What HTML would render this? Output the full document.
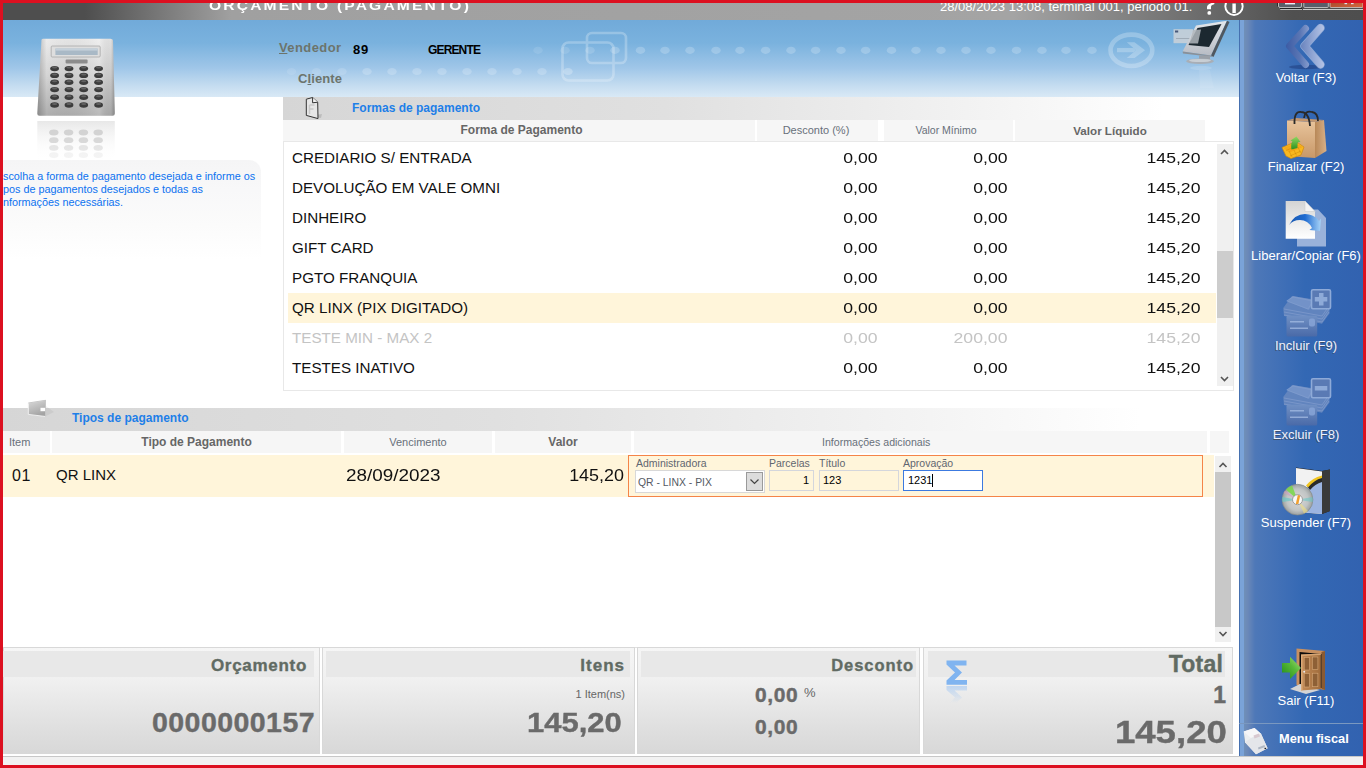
<!DOCTYPE html>
<html><head><meta charset="utf-8">
<style>
*{box-sizing:border-box;margin:0;padding:0}
html,body{width:1366px;height:768px;overflow:hidden;background:#fff}
body{position:relative;font-family:"Liberation Sans",sans-serif;}
.a{position:absolute}
.nw{white-space:nowrap}
svg{position:absolute;overflow:visible}
#rl{left:0;top:0;width:3px;height:768px;background:#DC1020}
#rt{left:0;top:0;width:1366px;height:3px;background:#DC1020}
#rr{left:1363px;top:0;width:3px;height:768px;background:#DC1020}
#rb{left:0;top:765px;width:1366px;height:3px;background:#DC1020}
#tb{left:3px;top:3px;width:1360px;height:17px;background:linear-gradient(90deg,#4e4e4e 0px,#4e4e4e 82px,#a0a0a0 228px,#a4a4a4 1010px,#505050 1290px,#4e4e4e 1360px)}
#hd{left:3px;top:20px;width:1236px;height:77px;background:linear-gradient(180deg,#71aad9 0%,#7ab2de 30%,#9fc6e8 62%,#c4dcf0 85%,#d9e9f6 100%)}
#rp{left:1239px;top:20px;width:124px;height:736px;background:linear-gradient(90deg,#4570b0 0px,#4570b0 1px,#7aa3d8 1px,#7aa3d8 5px,#7090b8 5px,#6a88b8 9px,#4e78b8 16px,#3c6db6 50px,#3368b4 66px,#3262b0 124px)}
.btxt{color:#fff;font-size:13px;text-align:center;width:124px;left:1244px}
.band{background:linear-gradient(90deg,#d6d6d6 0%,#e0e0e0 40%,#f4f4f4 75%,#ffffff 92%)}
.sect{color:#1e7fe8;font-weight:bold;font-size:12px}
.hcell{background:#f6f6f6;color:#68707a;font-size:11px;text-align:center;height:21px;line-height:21px}
.hcell.b{font-weight:bold;color:#666;font-size:12px}
.row{height:30px;left:284px;width:932px;font-size:15.2px;line-height:32px;color:#111}
.row span{position:absolute}
.row .c1{left:8px}
.row .c2,.row .c3,.row .c4{transform:scaleX(1.16);transform-origin:100% 0}
.row .c2{right:338.5px;}
.row .c3{right:208.5px}
.row .c4{right:16px}
.row.sel{background:#fff5da}
.row.dis{color:#c4c4c4}
.pan{top:647px;height:107px;border:1px solid #d8d8d8;background:linear-gradient(180deg,#f6f6f6 0%,#f0f0f0 30%,#dedede 80%,#d8d8d8 100%)}
.ph{top:651px;height:26px;background:#e8e8e8}
.pt{color:#616b63;font-weight:bold;font-size:16.5px;letter-spacing:.6px;-webkit-text-stroke:.35px #616b63}
.big{color:#6a6a6a;font-weight:bold;-webkit-text-stroke:.4px #6a6a6a}
.lbl{font-size:10.5px;color:#5f6670}
.fld{height:21px;border:1px solid #d4d6dc;font-size:11px;line-height:19px;color:#000}
</style></head><body>
<div id="tb" class="a"></div>
<div id="hd" class="a"></div>
<div id="rp" class="a"></div>

<!-- header decorations -->
<svg style="left:0;top:0" width="1240" height="100">
  <g fill="#fff">
    <ellipse cx="291.5" cy="71.5" rx="4.7" ry="3.6" opacity=".10"/>
    <ellipse cx="316.5" cy="71.5" rx="4.7" ry="3.6" opacity=".12"/>
    <ellipse cx="342" cy="71.5" rx="4.7" ry="3.6" opacity=".15"/>
    <ellipse cx="367" cy="71.5" rx="4.7" ry="3.6" opacity=".2"/>
    <ellipse cx="392" cy="71.5" rx="4.7" ry="3.6" opacity=".2"/>
    <ellipse cx="417" cy="71.5" rx="4.7" ry="3.6" opacity=".2"/>
    <ellipse cx="442" cy="71.5" rx="4.7" ry="3.6" opacity=".2"/>
    <ellipse cx="467" cy="71.5" rx="4.7" ry="3.6" opacity=".2"/>
    <ellipse cx="492" cy="71.5" rx="4.7" ry="3.6" opacity=".2"/>
    <ellipse cx="517" cy="71.5" rx="4.7" ry="3.6" opacity=".2"/>
    <ellipse cx="542" cy="71.5" rx="4.7" ry="3.6" opacity=".2"/>
    <ellipse cx="568" cy="71.5" rx="4.7" ry="3.6" opacity=".25"/>
  </g>
  <g fill="#fff" opacity=".2">
    <ellipse cx="538" cy="50.3" rx="4.7" ry="3.6" opacity=".5"/>
    <ellipse cx="565" cy="50.3" rx="4.7" ry="3.6" opacity=".6"/>
    <ellipse cx="590" cy="50.3" rx="4.7" ry="3.6" opacity=".7"/>
    <ellipse cx="615" cy="50.3" rx="4.7" ry="3.6"/>
    <ellipse cx="640.5" cy="50.3" rx="4.7" ry="3.6"/>
    <ellipse cx="665" cy="50.3" rx="4.7" ry="3.6"/>
    <ellipse cx="690" cy="50.3" rx="4.7" ry="3.6"/>
    <ellipse cx="716" cy="50.3" rx="4.7" ry="3.6"/>
    <ellipse cx="740" cy="50.3" rx="4.7" ry="3.6"/>
    <ellipse cx="765.6" cy="50.3" rx="4.7" ry="3.6"/>
    <ellipse cx="791" cy="50.3" rx="4.7" ry="3.6"/>
    <ellipse cx="815.6" cy="50.3" rx="4.7" ry="3.6"/>
    <ellipse cx="841" cy="50.3" rx="4.7" ry="3.6"/>
    <ellipse cx="865.6" cy="50.3" rx="4.7" ry="3.6"/>
    <ellipse cx="891.5" cy="50.3" rx="4.7" ry="3.6"/>
    <ellipse cx="916" cy="50.3" rx="4.7" ry="3.6"/>
    <ellipse cx="941" cy="50.3" rx="4.7" ry="3.6"/>
    <ellipse cx="966" cy="50.3" rx="4.7" ry="3.6"/>
    <ellipse cx="991" cy="50.3" rx="4.7" ry="3.6"/>
    <ellipse cx="1016.5" cy="50.3" rx="4.7" ry="3.6"/>
    <ellipse cx="1042" cy="50.3" rx="4.7" ry="3.6"/>
    <ellipse cx="1066" cy="50.3" rx="4.7" ry="3.6"/>
    <ellipse cx="1092" cy="50.3" rx="4.7" ry="3.6"/>
  </g>
  <g fill="none" stroke="#fff" stroke-width="2.6" opacity=".25">
    <rect x="562.5" y="42.5" width="51" height="38" rx="6"/>
    <rect x="587" y="33" width="39" height="30" rx="5"/>
    <ellipse cx="1131.4" cy="50.3" rx="20.9" ry="15.7" stroke-width="4.6"/>
  </g>
  <g fill="#fff" opacity=".25">
    <path d="M1117 48 H1133.5 L1136 50.2 L1133.5 52.3 H1117 Z"/>
    <path d="M1126.8 42.3 H1134.5 L1145 50.2 L1134.5 58 H1126.8 L1136 50.2 Z"/>
  </g>
</svg>

<!-- calculator -->
<svg style="left:0;top:0" width="130" height="170">
  <defs>
    <linearGradient id="cb" x1="0" y1="0" x2="0" y2="1"><stop offset="0" stop-color="#ececec"/><stop offset=".45" stop-color="#d6d6d6"/><stop offset="1" stop-color="#aeaeae"/></linearGradient>
    <linearGradient id="cs" x1="0" y1="0" x2="1" y2="0"><stop offset="0" stop-color="#000" stop-opacity=".22"/><stop offset=".12" stop-color="#000" stop-opacity="0"/><stop offset=".8" stop-color="#fff" stop-opacity=".15"/><stop offset=".95" stop-color="#000" stop-opacity=".05"/><stop offset="1" stop-color="#000" stop-opacity=".25"/></linearGradient>
    <linearGradient id="cr" x1="0" y1="0" x2="0" y2="1"><stop offset="0" stop-color="#e2e2e2" stop-opacity=".8"/><stop offset="1" stop-color="#fff" stop-opacity="0"/></linearGradient>
  </defs>
  <path d="M41.5 40 Q41.5 38.8 43.5 38.8 L110.5 38.8 Q112.8 38.8 113 40.5 L114.8 113.5 Q114.8 115.8 112.5 115.8 L39.5 115.8 Q37.2 115.8 37.3 113.5 Z" fill="url(#cb)"/>
  <path d="M41.5 40 Q41.5 38.8 43.5 38.8 L110.5 38.8 Q112.8 38.8 113 40.5 L114.8 113.5 Q114.8 115.8 112.5 115.8 L39.5 115.8 Q37.2 115.8 37.3 113.5 Z" fill="url(#cs)"/>
  <rect x="51.2" y="46" width="49" height="11" rx="1" fill="#dedede" stroke="#a8a8a8" stroke-width=".8"/>
  <rect x="55.4" y="48.6" width="42.3" height="6.4" fill="#a9b9c6"/>
  <rect x="55.4" y="48.6" width="42.3" height="2" fill="#c4d0da"/>
  <rect x="65.6" y="59.6" width="22" height="3.9" rx="1" fill="#8c8c8c"/>
  <g fill="#3c3c3c"><ellipse cx="54.6" cy="68.6" rx="4.4" ry="2.7"/><ellipse cx="69" cy="68.6" rx="4.4" ry="2.7"/><ellipse cx="83.7" cy="68.6" rx="4.4" ry="2.7"/><ellipse cx="98.6" cy="68.6" rx="4.4" ry="2.7"/><ellipse cx="54.6" cy="75.4" rx="4.4" ry="2.7"/><ellipse cx="69" cy="75.4" rx="4.4" ry="2.7"/><ellipse cx="83.7" cy="75.4" rx="4.4" ry="2.7"/><ellipse cx="98.6" cy="75.4" rx="4.4" ry="2.7"/><ellipse cx="54.6" cy="82.2" rx="4.4" ry="2.7"/><ellipse cx="69" cy="82.2" rx="4.4" ry="2.7"/><ellipse cx="83.7" cy="82.2" rx="4.4" ry="2.7"/><ellipse cx="98.6" cy="82.2" rx="4.4" ry="2.7"/><ellipse cx="54.6" cy="89.6" rx="4.4" ry="2.7"/><ellipse cx="69" cy="89.6" rx="4.4" ry="2.7"/><ellipse cx="83.7" cy="89.6" rx="4.4" ry="2.7"/><ellipse cx="98.6" cy="89.6" rx="4.4" ry="2.7"/><ellipse cx="54.6" cy="97.2" rx="4.4" ry="2.7"/><ellipse cx="69" cy="97.2" rx="4.4" ry="2.7"/><ellipse cx="83.7" cy="97.2" rx="4.4" ry="2.7"/><ellipse cx="98.6" cy="97.2" rx="4.4" ry="2.7"/><ellipse cx="54.6" cy="105" rx="4.4" ry="2.7"/><ellipse cx="69" cy="105" rx="4.4" ry="2.7"/><ellipse cx="83.7" cy="105" rx="4.4" ry="2.7"/><ellipse cx="98.6" cy="105" rx="4.4" ry="2.7"/></g>
  <g fill="#7a7a7a" opacity=".6"><ellipse cx="54.6" cy="67.6" rx="2.6" ry="1" /><ellipse cx="69" cy="67.6" rx="2.6" ry="1" /><ellipse cx="83.7" cy="67.6" rx="2.6" ry="1" /><ellipse cx="98.6" cy="67.6" rx="2.6" ry="1" /><ellipse cx="54.6" cy="74.4" rx="2.6" ry="1" /><ellipse cx="69" cy="74.4" rx="2.6" ry="1" /><ellipse cx="83.7" cy="74.4" rx="2.6" ry="1" /><ellipse cx="98.6" cy="74.4" rx="2.6" ry="1" /><ellipse cx="54.6" cy="81.2" rx="2.6" ry="1" /><ellipse cx="69" cy="81.2" rx="2.6" ry="1" /><ellipse cx="83.7" cy="81.2" rx="2.6" ry="1" /><ellipse cx="98.6" cy="81.2" rx="2.6" ry="1" /><ellipse cx="54.6" cy="88.6" rx="2.6" ry="1" /><ellipse cx="69" cy="88.6" rx="2.6" ry="1" /><ellipse cx="83.7" cy="88.6" rx="2.6" ry="1" /><ellipse cx="98.6" cy="88.6" rx="2.6" ry="1" /><ellipse cx="54.6" cy="96.2" rx="2.6" ry="1" /><ellipse cx="69" cy="96.2" rx="2.6" ry="1" /><ellipse cx="83.7" cy="96.2" rx="2.6" ry="1" /><ellipse cx="98.6" cy="96.2" rx="2.6" ry="1" /><ellipse cx="54.6" cy="104" rx="2.6" ry="1" /><ellipse cx="69" cy="104" rx="2.6" ry="1" /><ellipse cx="83.7" cy="104" rx="2.6" ry="1" /><ellipse cx="98.6" cy="104" rx="2.6" ry="1" /></g>
  <rect x="37.3" y="121" width="77.5" height="40" fill="url(#cr)"/>
  <g fill="#cacaca"><ellipse cx="53.8" cy="132.5" rx="4.7" ry="2.9" opacity="0.8"/><ellipse cx="68.6" cy="132.5" rx="4.7" ry="2.9" opacity="0.8"/><ellipse cx="83.4" cy="132.5" rx="4.7" ry="2.9" opacity="0.8"/><ellipse cx="98.2" cy="132.5" rx="4.7" ry="2.9" opacity="0.8"/><ellipse cx="53.8" cy="140.2" rx="4.7" ry="2.9" opacity="0.7"/><ellipse cx="68.6" cy="140.2" rx="4.7" ry="2.9" opacity="0.7"/><ellipse cx="83.4" cy="140.2" rx="4.7" ry="2.9" opacity="0.7"/><ellipse cx="98.2" cy="140.2" rx="4.7" ry="2.9" opacity="0.7"/><ellipse cx="53.8" cy="147.8" rx="4.7" ry="2.9" opacity="0.45"/><ellipse cx="68.6" cy="147.8" rx="4.7" ry="2.9" opacity="0.45"/><ellipse cx="83.4" cy="147.8" rx="4.7" ry="2.9" opacity="0.45"/><ellipse cx="98.2" cy="147.8" rx="4.7" ry="2.9" opacity="0.45"/><ellipse cx="53.8" cy="155.1" rx="4.7" ry="2.9" opacity="0.2"/><ellipse cx="68.6" cy="155.1" rx="4.7" ry="2.9" opacity="0.2"/><ellipse cx="83.4" cy="155.1" rx="4.7" ry="2.9" opacity="0.2"/><ellipse cx="98.2" cy="155.1" rx="4.7" ry="2.9" opacity="0.2"/></g>
</svg>

<!-- monitor -->
<svg style="left:0;top:0" width="1240" height="100">
  <defs><linearGradient id="mfr" x1="0" y1="0" x2="0" y2="1"><stop offset="0" stop-color="#e4e8ec"/><stop offset="1" stop-color="#b8bcc4"/></linearGradient></defs>
  <rect x="1173.5" y="29.2" width="19.5" height="14" fill="#c8d0d8" opacity=".9"/>
  <rect x="1175" y="30.5" width="3.2" height="2" fill="#46587a"/>
  <rect x="1176" y="38" width="14" height=".8" fill="#98a4b0"/>
  <path d="M1196 25.5 L1227 20.7 L1211 55.4 L1182.6 51.6 Z" fill="url(#mfr)"/>
  <path d="M1197.5 28 L1221.5 24 L1209 47 L1188.5 45 Z" fill="#1c2830"/>
  <path d="M1193 30 L1201 29.5 L1198 43.5 L1189.5 43.5 Z" fill="#b0b6bc" opacity=".85"/>
  <path d="M1227 20.7 L1229.5 22 L1213.5 57 L1211 55.4 Z" fill="#505860"/>
  <path d="M1182.6 51.6 L1211 55.4 L1213.5 57 L1183 53.5 Z" fill="#8a9098"/>
  <rect x="1199" y="55.5" width="11" height="4.5" fill="#9aa0a8"/>
  <ellipse cx="1200" cy="61.2" rx="13.8" ry="2.8" fill="#a8aeb6"/>
  <ellipse cx="1200" cy="60.5" rx="11" ry="1.6" fill="#c8ced4"/>
  <ellipse cx="1201" cy="68" rx="11" ry="2.2" fill="#fff" opacity=".14"/>
  <path d="M1199 70 h11 l4 18 h-14z" fill="#fff" opacity=".08"/>
</svg>

<!-- title -->
<div class="a nw" style="left:209px;top:-1.7px;color:#fff;font-weight:bold;font-size:13px;transform:scaleX(1.2);transform-origin:0 0;letter-spacing:1.8px">ORÇAMENTO (PAGAMENTO)</div>
<div class="a nw" style="left:940px;top:-1px;color:#fff;font-size:13px">28/08/2023 13:08, terminal 001, periodo 01.</div>
<!-- ? and i -->

<svg style="left:0;top:0" width="1366" height="20">
  <path d="M1207 9.2 L1207 6.8 Q1207.6 3 1214.6 2.4 L1214.2 4.2 Q1211 4.8 1211 7 L1211 9.2 Z" fill="#fff"/>
  <circle cx="1209.3" cy="12.9" r="1.9" fill="#fff"/>
  <circle cx="1234" cy="6.3" r="8.7" fill="none" stroke="#fff" stroke-width="1.9"/>
  <rect x="1232.4" y="3.5" width="3.4" height="9.5" fill="#fff"/>
  <defs><linearGradient id="clg" x1="0" y1="0" x2="1" y2="1"><stop offset="0" stop-color="#9a4028"/><stop offset="1" stop-color="#d8683e"/></linearGradient></defs>
  <path d="M1277.5 3 V6.5 L1280.5 9.5 H1302 M1303 9.5 H1363" fill="none" stroke="#d8d8d8" stroke-width=".9"/>
  <path d="M1277.5 3 V6.5 L1280 8.6 H1302" fill="none" stroke="#1a1a1a" stroke-width=".9"/>
  <rect x="1278.5" y="-2" width="23" height="9.5" rx="1.5" fill="#5a5e68" stroke="#c4c4c4" stroke-width=".9"/>
  <rect x="1303.8" y="-2" width="24.5" height="9.5" rx="1" fill="#5a5e6a" stroke="#c4c4c4" stroke-width=".9"/>
  <rect x="1330" y="-2" width="33" height="9.5" rx="1" fill="url(#clg)" stroke="#d8d8d8" stroke-width=".7"/>
  <rect x="1285" y="3" width="10" height="1.4" fill="#e8eef8"/>
  <rect x="1344.5" y="2.6" width="2.6" height="1.6" fill="#dfe6f2"/><rect x="1351" y="2.6" width="2.6" height="1.6" fill="#dfe6f2"/>
</svg>

<!-- header labels -->
<div class="a nw" style="left:279px;top:39.5px;color:#6c746c;font-weight:bold;font-size:13px;letter-spacing:.4px;"><u>V</u>endedor</div>
<div class="a nw" style="left:353px;top:42px;color:#000;font-weight:bold;font-size:13px;letter-spacing:.8px">89</div>
<div class="a nw" style="left:428px;top:43px;color:#000;font-weight:bold;font-size:12px;letter-spacing:-.85px">GERENTE</div>
<div class="a nw" style="left:298px;top:71px;color:#6c746c;font-weight:bold;font-size:13px;letter-spacing:.1px">C<u>l</u>iente</div>

<!-- info box -->
<div class="a" style="left:3px;top:160px;width:258px;height:100px;border-top-right-radius:12px;background:linear-gradient(180deg,#f5f5f6 0%,#f8f8f9 30%,#fbfbfb 65%,#fff 100%)"></div>
<div class="a nw" style="left:3px;top:170px;color:#0c72f0;font-size:10.8px;line-height:12.8px">scolha a forma de pagamento desejada e informe os<br>pos de pagamentos desejados e todas as<br>nformações necessárias.</div>

<!-- Formas de pagamento section -->
<div class="a band" style="left:283px;top:97px;width:956px;height:23px"></div>
<svg style="left:0;top:0" width="340" height="130">
  <path d="M309 116 L321 118 L322 114 Z" fill="#000" opacity=".12"/>
  <path d="M306.3 99.2 L312.6 97.5 L317.7 102.2 L318 118.6 L306.3 115.4 Z" fill="#e6e6e6" stroke="#333" stroke-width="1"/>
  <path d="M312.6 97.5 L312.6 102.8 L317.7 102.2" fill="#f4f4f4" stroke="#333" stroke-width="1"/>
  <path d="M309.5 105 h5 M309.5 105 v9 M309.5 109 h4" stroke="#c8c8c8" stroke-width="1.5" fill="none"/>
</svg>
<div class="a nw sect" style="left:352px;top:101px">Formas de pagamento</div>
<div class="a hcell b" style="left:283px;top:120px;width:472px;padding-left:5px">Forma de Pagamento</div>
<div class="a hcell" style="left:757px;top:120px;width:121px;padding-right:3px">Desconto (%)</div>
<div class="a hcell" style="left:884px;top:120px;width:129px;font-size:10.5px;padding-right:5px">Valor Mínimo</div>
<div class="a hcell b" style="left:1015px;top:120px;width:190px;font-size:11.6px">Valor Líquido</div>
<div class="a" style="left:283px;top:141px;width:951px;height:250px;border:1px solid #e8e8e8"></div>

<div class="a row" style="top:142px"><span class="c1">CREDIARIO S/ ENTRADA</span><span class="c2">0,00</span><span class="c3">0,00</span><span class="c4">145,20</span></div>
<div class="a row" style="top:172px"><span class="c1">DEVOLUÇÃO EM VALE OMNI</span><span class="c2">0,00</span><span class="c3">0,00</span><span class="c4">145,20</span></div>
<div class="a row" style="top:202px"><span class="c1">DINHEIRO</span><span class="c2">0,00</span><span class="c3">0,00</span><span class="c4">145,20</span></div>
<div class="a row" style="top:232px"><span class="c1">GIFT CARD</span><span class="c2">0,00</span><span class="c3">0,00</span><span class="c4">145,20</span></div>
<div class="a row" style="top:262px"><span class="c1">PGTO FRANQUIA</span><span class="c2">0,00</span><span class="c3">0,00</span><span class="c4">145,20</span></div>
<div class="a" style="left:288px;top:293px;width:928px;height:30px;background:#fff5da"></div>
<div class="a row" style="top:292px"><span class="c1">QR LINX (PIX DIGITADO)</span><span class="c2">0,00</span><span class="c3">0,00</span><span class="c4">145,20</span></div>
<div class="a row dis" style="top:321.5px"><span class="c1">TESTE MIN - MAX 2</span><span class="c2">0,00</span><span class="c3">200,00</span><span class="c4">145,20</span></div>
<div class="a row" style="top:351.5px"><span class="c1">TESTES INATIVO</span><span class="c2">0,00</span><span class="c3">0,00</span><span class="c4">145,20</span></div>

<!-- scrollbar 1 -->
<div class="a" style="left:1217px;top:144px;width:16px;height:242px;background:#f0f0f0"></div>
<div class="a" style="left:1217px;top:251px;width:16px;height:67px;background:#cdcdcd"></div>
<svg style="left:0;top:0" width="1240" height="400">
  <path d="M1221 154 L1224.5 150.5 L1228 154" fill="none" stroke="#555" stroke-width="1.6"/>
  <path d="M1221 377 L1224.5 380.5 L1228 377" fill="none" stroke="#555" stroke-width="1.6"/>
</svg>

<!-- Tipos de pagamento -->
<div class="a band" style="left:3px;top:408px;width:1236px;height:23px"></div>
<svg style="left:0;top:380px" width="80" height="60">
  <path d="M46 26 L54 32 L46 36 Z" fill="#000" opacity=".05"/>
  <defs><linearGradient id="cg" x1="0" y1="0" x2=".4" y2="1"><stop offset="0" stop-color="#dadada"/><stop offset="1" stop-color="#a4a4a4"/></linearGradient></defs>
  <path d="M28.3 23 L45.5 20.3 L45.5 36.5 L28.3 34.4 Z" fill="url(#cg)" stroke="#f4f4f4" stroke-width=".9"/>
  <path d="M28.3 23 L45.5 20.3 L45.5 36.5" fill="none" stroke="#8c8c8c" stroke-width=".6" opacity=".7"/>
  <rect x="40.5" y="27.8" width="4.6" height="3.4" fill="#fff"/>
</svg>
<div class="a nw sect" style="left:72px;top:411px">Tipos de pagamento</div>
<div class="a hcell" style="left:3px;top:431px;width:47px;height:22px;text-align:left;padding-left:6px;line-height:23px">Item</div>
<div class="a hcell b" style="left:52px;top:431px;width:289px;height:22px;line-height:23px">Tipo de Pagamento</div>
<div class="a hcell" style="left:344px;top:431px;width:148px;height:22px;line-height:23px">Vencimento</div>
<div class="a hcell b" style="left:495px;top:431px;width:136px;height:22px;line-height:23px">Valor</div>
<div class="a hcell" style="left:634px;top:431px;width:573px;height:22px"></div><div class="a nw hcell" style="left:822px;top:432px;background:none;font-size:10.6px">Informações adicionais</div>
<div class="a hcell" style="left:1210px;top:431px;width:19px;height:22px"></div>

<div class="a" style="left:3px;top:455px;width:1211px;height:42px;background:#fff5da"></div>
<div class="a nw" style="left:12px;top:467px;font-size:16px;color:#111;letter-spacing:.6px">01</div>
<div class="a nw" style="left:56px;top:466px;font-size:15px;color:#111">QR LINX</div>
<div class="a nw" style="left:345.6px;top:467px;font-size:16px;color:#111;transform:scaleX(1.18);transform-origin:0 0">28/09/2023</div>
<div class="a nw" style="right:742.5px;top:467px;font-size:16px;color:#111;transform:scaleX(1.12);transform-origin:100% 0">145,20</div>

<!-- detail form -->
<div class="a" style="left:628px;top:455px;width:575px;height:42px;border:1px solid #f58448"></div>
<div class="a nw lbl" style="left:636px;top:457px">Administradora</div>
<div class="a nw lbl" style="left:769px;top:457px">Parcelas</div>
<div class="a nw lbl" style="left:819px;top:457px">Título</div>
<div class="a nw lbl" style="left:903px;top:457px">Aprovação</div>
<div class="a fld" style="left:635px;top:470px;width:130px;height:23px;background:#fff;border-color:#d8d8d8"></div>
<div class="a nw" style="left:638px;top:476.5px;font-size:10.4px;color:#555a64">QR - LINX - PIX</div>
<div class="a" style="left:746px;top:472px;width:17px;height:19px;background:#dcdcdc;border:1px solid #9a9a9a"></div>
<svg style="left:0;top:0" width="1000" height="500"><path d="M750.5 479.5 L754.5 483.5 L758.5 479.5" fill="none" stroke="#444" stroke-width="1.2"/></svg>
<div class="a fld" style="left:769px;top:470px;width:45px;background:#fff5da;text-align:right;padding-right:4px">1</div>
<div class="a fld" style="left:819px;top:470px;width:80px;background:#fff5da;padding-left:3px">123</div>
<div class="a fld" style="left:903px;top:470px;width:80px;background:#fff;border:1px solid #3c7ae0;padding-left:4px">1231<span style="display:inline-block;width:1px;height:13px;background:#000;vertical-align:-3px"></span></div>

<!-- scrollbar 2 -->
<div class="a" style="left:1215px;top:456px;width:16px;height:186px;background:#f0f0f0"></div>
<div class="a" style="left:1215px;top:472px;width:16px;height:155px;background:#c8c8c8"></div>
<svg style="left:0;top:0" width="1240" height="650">
  <path d="M1219.5 467 L1223 463.5 L1226.5 467" fill="none" stroke="#555" stroke-width="1.6"/>
  <path d="M1219.5 632 L1223 635.5 L1226.5 632" fill="none" stroke="#555" stroke-width="1.6"/>
</svg>
<div class="a" style="left:3px;top:647px;width:1230px;height:1px;background:#e0e0e0"></div>

<!-- bottom panels -->
<div class="a pan" style="left:3px;width:317px"></div>
<div class="a ph" style="left:3px;width:311px"></div>
<div class="a nw pt" style="right:1059px;top:655.5px;font-size:17px;letter-spacing:.7px">Orçamento</div>
<div class="a nw big" style="right:1051px;top:706px;font-size:28.5px;letter-spacing:.45px">0000000157</div>

<div class="a pan" style="left:322px;width:313px"></div>
<div class="a ph" style="left:326px;width:304px"></div>
<div class="a nw pt" style="right:741px;top:656px;font-size:17px;letter-spacing:1px">Itens</div>
<div class="a nw" style="right:741px;top:688px;font-size:11px;color:#666">1 Item(ns)</div>
<div class="a nw big" style="right:744px;top:707px;font-size:28px;transform:scaleX(1.105);transform-origin:100% 0">145,20</div>

<div class="a pan" style="left:637px;width:283px"></div>
<div class="a ph" style="left:641px;width:275px"></div>
<div class="a nw pt" style="right:452px;top:656px;letter-spacing:.95px">Desconto</div>
<div class="a nw big" style="left:755px;top:682.5px;font-size:21px;letter-spacing:.6px">0,00</div>
<div class="a nw" style="left:804px;top:685px;font-size:13px;color:#666">%</div>
<div class="a nw big" style="left:755px;top:715px;font-size:21px;letter-spacing:.6px">0,00</div>

<div class="a pan" style="left:923px;width:310px"></div>
<div class="a ph" style="left:928px;width:297px"></div>
<svg style="left:0;top:0" width="1240" height="768">
  <defs><linearGradient id="sg" x1="0" y1="0" x2="0" y2="1"><stop offset="0" stop-color="#86b8f4" stop-opacity=".45"/><stop offset="1" stop-color="#86b8f4" stop-opacity="0"/></linearGradient></defs>
  <filter id="bl" x="-20%" y="-20%" width="140%" height="140%"><feGaussianBlur stdDeviation=".45"/></filter>
  <path d="M946.5 660.5 H966.5 V665.5 H954.5 L962 672.5 L954.5 680 H967 V684.8 H946.5 V680.5 L955 672.5 L946.5 664.5 Z" fill="#80b4f0" filter="url(#bl)"/>
  <path d="M946.5 686 H967 V690.5 H954.5 L962 697.5 L956 703 H950 L955 697.5 L946.5 690 Z" fill="url(#sg)" filter="url(#bl)"/>
</svg>
<div class="a nw pt" style="right:143px;top:651px;font-size:23px;letter-spacing:.2px">Total</div>
<div class="a nw big" style="right:140px;top:682px;font-size:23px">1</div>
<div class="a nw big" style="right:139px;top:714.5px;font-size:31px;transform:scaleX(1.18);transform-origin:100% 0">145,20</div>

<div class="a" style="left:3px;top:756px;width:1360px;height:9px;background:#f2f2f2;border-top:1px solid #c8c8c8"></div>

<!-- right panel icons -->
<svg style="left:0;top:0" width="1366" height="768">
  <defs>
    <linearGradient id="chv1" gradientUnits="userSpaceOnUse" x1="1285" y1="0" x2="1310" y2="0"><stop offset="0" stop-color="#3a5aa4"/><stop offset=".6" stop-color="#5a76b4"/><stop offset="1" stop-color="#8aa0d0"/></linearGradient>
    <linearGradient id="chv2" gradientUnits="userSpaceOnUse" x1="1300" y1="0" x2="1325" y2="0"><stop offset="0" stop-color="#6882bc"/><stop offset=".6" stop-color="#98acd8"/><stop offset="1" stop-color="#b8c6e6"/></linearGradient>
    <linearGradient id="bag" x1="0" y1="0" x2="0" y2="1"><stop offset="0" stop-color="#e8c49c"/><stop offset="1" stop-color="#c89868"/></linearGradient>
    <linearGradient id="bagside" x1="0" y1="0" x2="1" y2="0"><stop offset="0" stop-color="#b88858"/><stop offset="1" stop-color="#d8b088"/></linearGradient>
    <linearGradient id="doc" x1="0" y1="0" x2="0" y2="1"><stop offset="0" stop-color="#d4d4d4"/><stop offset="1" stop-color="#ffffff"/></linearGradient>
    <linearGradient id="arr" x1="0" y1="0" x2="1" y2="0"><stop offset="0" stop-color="#1a58b0"/><stop offset=".5" stop-color="#1e6ad0"/><stop offset="1" stop-color="#a8d4f8"/></linearGradient>
    <linearGradient id="card" x1="0" y1="0" x2="0" y2="1"><stop offset="0" stop-color="#7090c4"/><stop offset="1" stop-color="#4a6aa8"/></linearGradient>
    <linearGradient id="door" x1="0" y1="0" x2="1" y2="0"><stop offset="0" stop-color="#c48c58"/><stop offset="1" stop-color="#a06c3c"/></linearGradient><linearGradient id="grn2" x1="0" y1="1" x2="1" y2="0"><stop offset="0" stop-color="#1e8a18"/><stop offset=".55" stop-color="#58b838"/><stop offset="1" stop-color="#a8e080"/></linearGradient>
    <linearGradient id="grn" x1="0" y1="0" x2="0" y2="1"><stop offset="0" stop-color="#90d860"/><stop offset="1" stop-color="#2a9020"/></linearGradient>
    <radialGradient id="cd" cx=".5" cy=".5" r=".5"><stop offset="0" stop-color="#fff"/><stop offset=".3" stop-color="#d0d0d0"/><stop offset=".7" stop-color="#c0c4c4"/><stop offset="1" stop-color="#9ca0a0"/></radialGradient>
  </defs>
  <!-- Voltar chevrons -->
  <ellipse cx="1306" cy="67" rx="17" ry="2.2" fill="#1a3470" opacity=".45"/>
  <polyline points="1305.5,28.5 1289.5,46 1305.5,64.5" fill="none" stroke="url(#chv1)" stroke-width="7" stroke-linejoin="round" stroke-linecap="round"/>
  <polyline points="1320.5,28 1304.5,46 1320.5,64.5" fill="none" stroke="#d4dcf0" stroke-width="8.4" stroke-linejoin="round" stroke-linecap="round" opacity=".55"/>
  <polyline points="1320.5,28 1304.5,46 1320.5,64.5" fill="none" stroke="url(#chv2)" stroke-width="7" stroke-linejoin="round" stroke-linecap="round"/>
  <!-- Finalizar bag -->
  <path d="M1287 120.4 L1315 122 L1315 158 L1287 156 Z" fill="url(#bag)"/>
  <path d="M1315 122 L1324 120 L1326.5 151 L1315 158 Z" fill="url(#bagside)"/>
  <path d="M1287 120.4 L1296 118 L1324 120 L1315 122 Z" fill="#c49870"/>
  <path d="M1294.5 124 Q1294 111 1301 112 Q1309 112 1310 126" fill="none" stroke="#2a2a2a" stroke-width="1.8"/>
  <path d="M1304 118 Q1305 110 1312 112 Q1318 113 1318 121" fill="none" stroke="#2a2a2a" stroke-width="1.8"/>
  <path d="M1282 147.5 L1296 141.5 L1304 147 L1301 155 L1291 158.5 L1286 156 Z" fill="#f8b820" stroke="#d08810" stroke-width=".7"/>
  <path d="M1283.5 148 L1296 142.8 L1302.5 147.3 L1289.5 152.5 Z" fill="#f4a818"/>
  <path d="M1286 150.5 L1298 145.5 M1290 156 L1301 151 M1289 151 L1292 157 M1293.5 149 L1296.5 155.5 M1298 147 L1300.5 153" stroke="#c88000" stroke-width=".6" fill="none" opacity=".7"/>
  <path d="M1291.5 149.5 Q1290.5 143 1292.5 141.5 L1290.5 140.5 L1296.5 136.5 L1300.5 142 L1298 142.3 Q1297 145.5 1297.5 148 Z" fill="url(#grn)"/>
  <!-- Liberar docs -->
  <path d="M1297 209.5 L1318 209.5 L1326 218 L1326 246.5 L1297 246.5 Z" fill="#9ab2da"/>
  <path d="M1285.7 201 L1305 201 L1315 211.5 L1315 238.7 L1285.7 238.7 Z" fill="url(#doc)"/>
  <path d="M1305 201 L1305 211.5 L1315 211.5 Z" fill="#f4f4f4" stroke="#c8c8c8" stroke-width=".5"/>
  <path d="M1289 225 Q1296 212 1309 214.5 Q1316 216 1319 221 L1321 218.5 L1320 231 L1309.5 230 L1312 228 Q1308 220 1300 220 Q1293 220 1289 225 Z" fill="url(#arr)"/>
  <!-- Incluir -->
  <path d="M1283.2 308 L1292 296 L1330 302 L1329.4 313.6 L1322 323.7 L1284 316 Z" fill="#6a8ac0" opacity=".85"/>
  <path d="M1286 301 L1293 296 L1314 300 L1309 310 Z" fill="#7a98cc" opacity=".7"/>
  <path d="M1284 309 L1322 316 L1329 306 M1284 312 L1322 319 L1329 309 M1284 315 L1322 322 L1329 312" fill="none" stroke="#90a8d4" stroke-width=".7" opacity=".7"/>
  <path d="M1287 301 L1293 297 L1313 301 L1308 309 Z" fill="none" stroke="#90a8d4" stroke-width=".6" opacity=".6"/>
  <rect x="1286.5" y="315.8" width="30.7" height="20.7" rx="1.5" fill="url(#card)"/>
  <rect x="1290" y="321" width="14" height="1.5" fill="#a0b8e0" opacity=".8"/>
  <rect x="1290" y="327.5" width="18" height="1.5" fill="#a0b8e0" opacity=".8"/>
  <rect x="1309" y="318.5" width="6" height="8" rx="2" fill="#8aa6d8" opacity=".8"/>
  <rect x="1311.5" y="289.7" width="19" height="19" rx="1.5" fill="#5a7ab4" stroke="#8eaad8" stroke-width="1.6"/>
  <rect x="1319" y="293" width="4.5" height="12.5" fill="#8eaad8"/>
  <rect x="1314.8" y="297" width="12.5" height="4.5" fill="#8eaad8"/>
  <!-- Excluir -->
  <path d="M1283.2 397 L1292 385 L1330 391 L1329.4 402.6 L1322 412.7 L1284 405 Z" fill="#6a8ac0" opacity=".85"/>
  <path d="M1286 390 L1293 385 L1314 389 L1309 399 Z" fill="#7a98cc" opacity=".7"/>
  <path d="M1284 398 L1322 405 L1329 395 M1284 401 L1322 408 L1329 398 M1284 404 L1322 411 L1329 401" fill="none" stroke="#90a8d4" stroke-width=".7" opacity=".7"/>
  <path d="M1287 390 L1293 386 L1313 390 L1308 398 Z" fill="none" stroke="#90a8d4" stroke-width=".6" opacity=".6"/>
  <rect x="1286.5" y="404.8" width="30.7" height="20.7" rx="1.5" fill="url(#card)"/>
  <rect x="1290" y="410" width="14" height="1.5" fill="#a0b8e0" opacity=".8"/>
  <rect x="1290" y="416.5" width="18" height="1.5" fill="#a0b8e0" opacity=".8"/>
  <rect x="1309" y="407.5" width="6" height="8" rx="2" fill="#8aa6d8" opacity=".8"/>
  <rect x="1311.5" y="378.7" width="19" height="19" rx="1.5" fill="#5a7ab4" stroke="#8eaad8" stroke-width="1.6"/>
  <rect x="1314.8" y="386" width="12.5" height="4.5" fill="#8eaad8"/>
  <!-- Suspender -->
  <path d="M1296 467.5 L1322 471 L1330 469.5 L1330 511 L1322 514 L1296 512 Z" fill="#1e1e1e"/>
  <path d="M1322 471 L1330 469.5 L1330 511 L1322 514 Z" fill="#3a3a3a"/>
  <path d="M1296 468 L1322 471.5 L1322 514 L1296 512 Z" fill="#f2f2f2"/>
  <path d="M1303 493 Q1311 479 1322 476.5 L1322 514 L1300 512 Z" fill="#9cb4e0"/>
  <path d="M1307 486 Q1313 479.5 1322 477 L1322 482 Q1315 484 1310 490 Z" fill="#2a2a2a"/>
  <path d="M1306 485.5 Q1312 478 1322 475.5 L1322 478 Q1314 480 1308 487.5 Z" fill="#f0c420"/>
  <circle cx="1297.5" cy="499.7" r="15.4" fill="url(#cd)" stroke="#7c8484" stroke-width=".6"/>
  <path d="M1297.5 499.7 L1286 489.5 A15.4 15.4 0 0 1 1292 485.5 Z" fill="#78d848" opacity=".85"/>
  <path d="M1297.5 499.7 L1282.5 502 A15.4 15.4 0 0 1 1282.3 497 Z" fill="#60c8c8" opacity=".6"/>
  <path d="M1297.5 499.7 L1312.5 497 A15.4 15.4 0 0 1 1312.8 502 Z" fill="#60c8c8" opacity=".5"/>
  <path d="M1297.5 499.7 L1304 513.5 A15.4 15.4 0 0 0 1308 511 Z" fill="#f0e080" opacity=".6"/>
  <path d="M1297.5 499.7 L1283.5 493 A15.4 15.4 0 0 1 1285 490.5 Z" fill="#d0a0c0" opacity=".6"/>
  <circle cx="1297.5" cy="499.7" r="5" fill="#f8f8f8" stroke="#8a8a8a" stroke-width=".8"/>
  <path d="M1295.8 504 L1297.8 495 L1300.2 495.5 L1298.4 504 Z" fill="#f0a030"/>
  <!-- Sair door -->
  <path d="M1296.5 648.6 L1325 651 L1325 690 L1296.5 685 Z" fill="#c89060"/>
  <path d="M1321.5 652 L1325 651 L1325 690 L1321.5 689 Z" fill="#8a5a30"/>
  <path d="M1299.5 652 L1321.5 654 L1321.5 688 L1299.5 684 Z" fill="#0c0c0c"/>
  <path d="M1290 689 L1300 684 L1320 690 L1306 694 Z" fill="#d4d4d4"/>
  <path d="M1301 654.5 L1320.8 653.5 L1320.8 689 L1301 690.5 Z" fill="url(#door)"/>
  <path d="M1301 654.5 L1320.8 653.5 L1320.8 655 L1302.5 656 L1302.5 690.4 L1301 690.5 Z" fill="#e0b080" opacity=".8"/>
  <g fill="#8e6036" stroke="#d8a878" stroke-width=".6">
    <rect x="1304.2" y="657.5" width="5.3" height="12.5"/><rect x="1312.3" y="657" width="5.6" height="12.5"/>
    <rect x="1304.2" y="673.5" width="5.3" height="13.5"/><rect x="1312.3" y="673.2" width="5.6" height="13.5"/>
  </g>
  <circle cx="1304.2" cy="671.8" r="1" fill="#e8e8e8"/>
  <path d="M1282 663 L1290 663 L1290 656.8 L1301 668 L1290 679 L1290 672.6 L1282 672.6 Z" fill="url(#grn2)"/>
  <!-- printer -->
  <path d="M1243.7 731.4 L1254.5 727.9 L1261 733.7 L1267.6 748.3 L1256 754.3 L1245 742.2 Z" fill="#eceef0"/>
  <path d="M1243.7 731.4 L1254.5 727.9 L1261 733.7 L1251 738 Z" fill="#f6f6f8"/>
  <path d="M1245 742.2 L1251 738 L1261 733.7 L1267.6 748.3 L1256 754.3 Z" fill="#e4e6ea"/>
  <path d="M1253.5 735.5 L1259 733.5 L1260 736.5 L1254.5 738.5 Z" fill="#d8c8d0"/>
  <path d="M1258 747.5 L1264.5 745 L1265 747 L1258.5 749.5 Z" fill="#b0b8c4"/>
  <rect x="1264.5" y="747.8" width="1.6" height="1.3" fill="#222"/>
</svg>

<!-- right panel buttons text -->
<div class="a nw btxt" style="top:70px">Voltar (F3)</div>
<div class="a nw btxt" style="top:159px">Finalizar (F2)</div>
<div class="a nw btxt" style="top:248px">Liberar/Copiar (F6)</div>
<div class="a nw btxt" style="top:338px;color:#eef2fa;text-shadow:-.6px .6px 0 rgba(60,60,60,.6)">Incluir (F9)</div>
<div class="a nw btxt" style="top:427px;color:#eef2fa;text-shadow:-.6px .6px 0 rgba(60,60,60,.6)">Excluir (F8)</div>
<div class="a nw btxt" style="top:515px">Suspender (F7)</div>
<div class="a nw btxt" style="top:693px">Sair (F11)</div>
<div class="a" style="left:1239px;top:723px;width:124px;height:1px;background:#7a98c0"></div>
<div class="a nw" style="left:1279px;top:731px;color:#fff;font-weight:bold;font-size:12.8px">Menu fiscal</div>

<div id="rl" class="a"></div><div id="rt" class="a"></div><div id="rr" class="a"></div><div id="rb" class="a"></div>
</body></html>
